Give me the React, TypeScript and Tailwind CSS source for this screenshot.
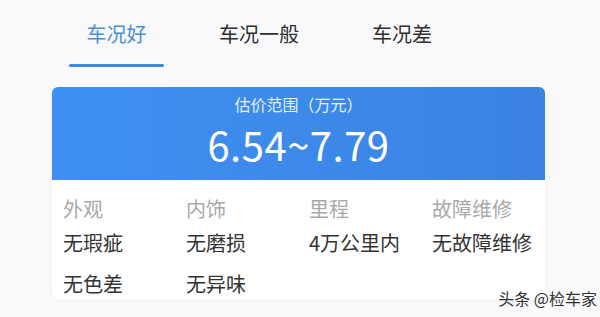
import React from 'react';

const tabs = ['车况好', '车况一般', '车况差'];

const columns = [
  { title: '外观', items: ['无瑕疵', '无色差'] },
  { title: '内饰', items: ['无磨损', '无异味'] },
  { title: '里程', items: ['4万公里内'] },
  { title: '故障维修', items: ['无故障维修'] },
];

const font = { fontFamily: '"Noto Sans CJK SC", "Noto Sans", sans-serif' };

export default function App() {
  return (
    <div className="relative w-[600px] h-[317px] overflow-hidden bg-[#f9f9fb]" style={font}>
      {/* tabs */}
      <div className="flex pl-[69px] pt-[17px] h-[87px]">
        {tabs.map((t, i) => (
          <div
            key={t}
            className={
              i === 0
                ? 'w-[95px] flex flex-col items-center'
                : i === 1
                ? 'w-[190px] flex flex-col items-center'
                : 'w-[96px] flex flex-col items-center'
            }
          >
            <span
              className={
                i === 0
                  ? 'text-[20px] leading-[34px] text-[#4a8fdc]'
                  : 'text-[20px] leading-[34px] text-[#2f2f2f]'
              }
            >
              {t}
            </span>
            {i === 0 && <div className="mt-[13px] w-[95px] h-[3px] rounded-full bg-[#3f86e0]" />}
          </div>
        ))}
      </div>

      <div className="mx-[52px] w-[493px]">
        {/* price */}
        <div className="h-[93px] rounded-t-[6px] bg-gradient-to-r from-[#3e91f2] to-[#3b82e2] flex flex-col items-center text-white">
          <div className="mt-[5px] text-[16px] leading-[24px] text-[#e6f0fc]">估价范围（万元）</div>
          <div className="mt-[2px] text-[40px] leading-[52px] tracking-[0.5px]">6.54~7.79</div>
        </div>

        {/* details */}
        <div className="h-[120px] bg-white rounded-b-[8px] shadow-[0_1px_3px_rgba(0,0,0,0.04)] grid grid-cols-[123px_123px_123px_113px] pl-[11px] pt-[16px]">
          {columns.map((c) => (
            <div key={c.title} className="flex flex-col">
              <span className="text-[20px] leading-[26px] text-[#a9a9a9]">{c.title}</span>
              <div className="mt-[8px] flex flex-col gap-[15px]">
                {c.items.map((it) => (
                  <span key={it} className="text-[20px] leading-[26px] text-[#333333] whitespace-nowrap">
                    {it}
                  </span>
                ))}
              </div>
            </div>
          ))}
        </div>
      </div>

      <div className="absolute right-[3px] bottom-[9px] text-[16px] leading-[20px] text-[#333]">头条 @检车家</div>
    </div>
  );
}
